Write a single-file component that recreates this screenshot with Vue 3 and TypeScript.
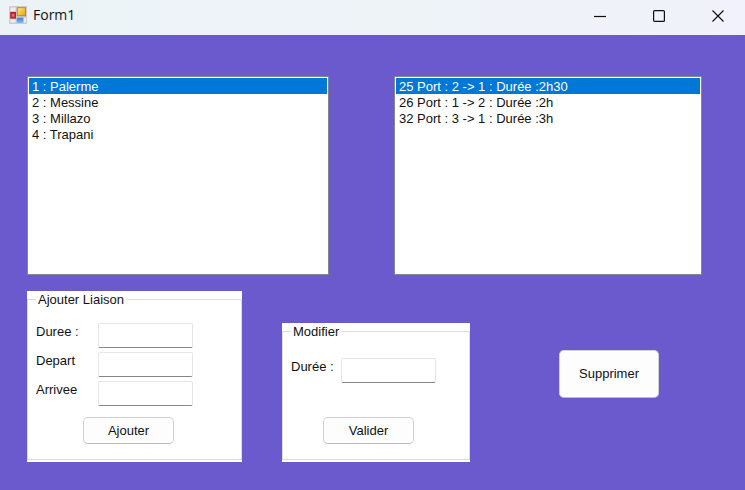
<script setup lang="ts">
import { ref } from 'vue'

interface Port {
  id: number
  name: string
}

interface Liaison {
  id: number
  depart: number
  arrivee: number
  duree: string
}

const ports = ref<Port[]>([
  { id: 1, name: 'Palerme' },
  { id: 2, name: 'Messine' },
  { id: 3, name: 'Millazo' },
  { id: 4, name: 'Trapani' },
])

const liaisons = ref<Liaison[]>([
  { id: 25, depart: 2, arrivee: 1, duree: '2h30' },
  { id: 26, depart: 1, arrivee: 2, duree: '2h' },
  { id: 32, depart: 3, arrivee: 1, duree: '3h' },
])

const selectedPort = ref<number>(1)
const selectedLiaison = ref<number>(25)

const duree = ref('')
const depart = ref('')
const arrivee = ref('')
const nouvelleDuree = ref('')

function ajouter(): void {
  if (!duree.value || !depart.value || !arrivee.value) return
  const id = Math.max(0, ...liaisons.value.map((l) => l.id)) + 1
  liaisons.value.push({
    id,
    depart: Number(depart.value),
    arrivee: Number(arrivee.value),
    duree: duree.value,
  })
}

function valider(): void {
  const liaison = liaisons.value.find((l) => l.id === selectedLiaison.value)
  if (liaison && nouvelleDuree.value) liaison.duree = nouvelleDuree.value
}

function supprimer(): void {
  liaisons.value = liaisons.value.filter((l) => l.id !== selectedLiaison.value)
}
</script>

<template>
  <div class="window">
    <header class="titlebar">
      <svg class="app-icon" viewBox="0 0 18 18" aria-hidden="true">
        <defs>
          <linearGradient id="gold" x1="0" y1="0" x2="1" y2="1">
            <stop offset="0" stop-color="#ffe88a" />
            <stop offset="1" stop-color="#e9a400" />
          </linearGradient>
          <linearGradient id="blue" x1="0" y1="0" x2="0" y2="1">
            <stop offset="0" stop-color="#3f7fe0" />
            <stop offset="1" stop-color="#7db4fa" />
          </linearGradient>
        </defs>
        <rect width="18" height="18" fill="#c9ccd1" />
        <rect x="1.5" y="1.5" width="5" height="3.5" fill="#eceef0" />
        <rect x="1.5" y="13.5" width="5" height="3" fill="#eceef0" />
        <rect x="15" y="12" width="2" height="4.5" fill="#eceef0" />
        <rect x="1.2" y="6" width="5.8" height="6.6" fill="#b3242a" />
        <rect x="2.8" y="7.8" width="2.6" height="3" fill="#de7476" />
        <rect x="7.8" y="1.2" width="9.2" height="9" fill="#c08c1c" />
        <rect x="8.8" y="2.2" width="7.2" height="7" fill="url(#gold)" />
        <rect x="7.8" y="11.8" width="6.4" height="5" fill="url(#blue)" />
      </svg>
      <h1 class="title">Form1</h1>
      <div class="controls">
        <button type="button" class="control" aria-label="Réduire">
          <svg viewBox="0 0 12 12"><path d="M0 6.5H12" /></svg>
        </button>
        <button type="button" class="control" aria-label="Agrandir">
          <svg viewBox="0 0 12 12"><rect x="0.6" y="0.6" width="10.8" height="10.8" rx="1" /></svg>
        </button>
        <button type="button" class="control" aria-label="Fermer">
          <svg viewBox="0 0 12 12"><path d="M0.5 0.5L11.5 11.5M11.5 0.5L0.5 11.5" /></svg>
        </button>
      </div>
    </header>

    <main class="client">
      <section class="lists">
        <select v-model="selectedPort" class="listbox" size="12" aria-label="Ports">
          <option v-for="p in ports" :key="p.id" :value="p.id">{{ p.id }} : {{ p.name }}</option>
        </select>
        <select v-model="selectedLiaison" class="listbox" size="12" aria-label="Liaisons">
          <option v-for="l in liaisons" :key="l.id" :value="l.id">{{ l.id }} Port : {{ l.depart }} -&gt; {{ l.arrivee }} : Durée :{{ l.duree }}</option>
        </select>
      </section>

      <section class="forms">
        <form class="panel add" @submit.prevent="ajouter">
          <fieldset class="group">
            <legend>Ajouter Liaison</legend>
            <div class="fields">
              <label for="duree">Duree :</label>
              <input id="duree" v-model="duree" type="text" />
              <label for="depart">Depart</label>
              <input id="depart" v-model="depart" type="text" />
              <label for="arrivee">Arrivee</label>
              <input id="arrivee" v-model="arrivee" type="text" />
            </div>
            <button type="submit" class="button">Ajouter</button>
          </fieldset>
        </form>

        <form class="panel edit" @submit.prevent="valider">
          <fieldset class="group">
            <legend>Modifier</legend>
            <div class="fields">
              <label for="nouvelle-duree">Durée :</label>
              <input id="nouvelle-duree" v-model="nouvelleDuree" type="text" />
            </div>
            <button type="submit" class="button">Valider</button>
          </fieldset>
        </form>

        <button type="button" class="button remove" @click="supprimer">Supprimer</button>
      </section>
    </main>
  </div>
</template>

<style>
body {
  margin: 0;
  background: #6a5acd;
}
</style>

<style scoped>
.window {
  display: flex;
  flex-direction: column;
  min-height: 100vh;
  font: 14px/16px "Liberation Sans", Arial, sans-serif;
  color: #111;
}

.window * {
  box-sizing: border-box;
}

.titlebar {
  display: flex;
  align-items: center;
  height: 35px;
  padding: 0 11px 5px 9px;
  background: linear-gradient(90deg, #ecf3f7, #eff3f9 80%, #f1f2fb);
}

.app-icon {
  width: 18px;
  height: 18px;
}

.title {
  margin: 0 0 0 6px;
  font: 400 14px/20px "Open Sans", "Noto Sans", sans-serif;
}

.controls {
  display: flex;
  gap: 27px;
  margin-left: auto;
}

.control {
  display: grid;
  place-items: center;
  width: 32px;
  height: 30px;
  padding: 1px 0 0;
  border: 0;
  background: none;
}

.control svg {
  width: 12px;
  height: 12px;
  fill: none;
  stroke: #111;
  stroke-width: 1.2;
}

.client {
  flex: 1;
  padding: 41px 43px 28px 27px;
  background: #6a5acd;
}

.lists {
  display: grid;
  grid-template-columns: 302fr 308fr;
  gap: 65px;
}

.listbox {
  width: 100%;
  height: 199px;
  padding: 1px;
  border: 1px solid #828790;
  border-radius: 0;
  outline: 0;
  background: #fff;
  color: #111;
  font: 13px/16px "Liberation Sans", Arial, sans-serif;
  overflow: hidden;
}

.listbox option {
  height: 16px;
  min-height: 16px;
  padding: 1px 3px 0;
  line-height: 15px;
}

.listbox option:checked {
  background: #0078d7 linear-gradient(#0078d7, #0078d7);
  color: #fff;
}

.forms {
  display: flex;
  align-items: flex-end;
  gap: 40px;
  margin-top: 16px;
}

.panel {
  padding-bottom: 2px;
  background: #fff;
  font-size: 13px;
}

.group {
  min-width: 0;
  margin: 0;
  padding: 16px 8px 15px;
  border: 1px solid #dcdcdc;
}

.group legend {
  padding: 1px 2px 0;
  line-height: 15px;
}

.fields {
  display: grid;
  grid-template-columns: 62px 95px;
  gap: 4px 0;
  line-height: 18px;
}

.fields input {
  width: 100%;
  height: 25px;
  padding: 2px 4px;
  border: 1px solid #e6e6e6;
  border-bottom-color: #868686;
  border-radius: 2px;
  outline: 0;
  background: #fff;
  font: inherit;
}

.button {
  width: 91px;
  height: 27px;
  padding: 0;
  border: 1px solid #d0d0d0;
  border-bottom-color: #bcbcbc;
  border-radius: 5px;
  background: #fdfdfd;
  color: #111;
  font: 13px/16px "Liberation Sans", Arial, sans-serif;
}

.add {
  width: 215px;
}

.add .button {
  display: block;
  margin: 11px 0 0 47px;
}

.edit {
  width: 188px;
}

.edit .group {
  padding-top: 19px;
}

.edit .fields {
  grid-template-columns: 50px 95px;
}

.edit .button {
  display: block;
  margin: 34px 0 0 32px;
}

.remove {
  width: 100px;
  height: 48px;
  margin: 0 0 64px 49px;
}
</style>
